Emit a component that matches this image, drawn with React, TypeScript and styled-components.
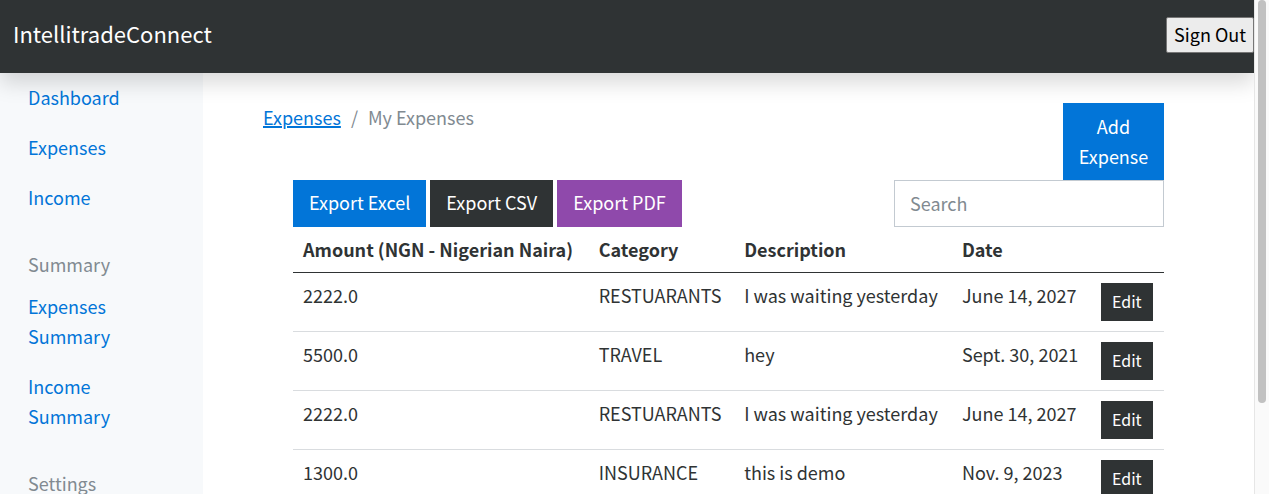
import React from "react";
import styled, { createGlobalStyle } from "styled-components";

const blue = "#0275d8";
const dark = "#2f3334";
const purple = "#8f49ab";
const muted = "#818a91";

const GlobalStyle = createGlobalStyle`
  *, *::before, *::after { box-sizing: border-box; }
  body {
    margin: 0;
    background: #fff;
    color: ${dark};
    font-family: "Noto Sans CJK SC", "Open Sans", sans-serif;
    font-size: 18px;
    line-height: 30px;
  }
  button, input { font-family: inherit; font-size: inherit; }
`;

const Shell = styled.div`
  display: flex;
  height: 100vh;
  overflow: hidden;
`;

const Page = styled.div`
  display: flex;
  flex-direction: column;
  flex: 1;
  min-width: 0;
  overflow: hidden;
`;

const Header = styled.header`
  position: relative;
  z-index: 1;
  display: flex;
  flex: none;
  align-items: center;
  justify-content: space-between;
  height: 73px;
  padding: 0 0 4px 13px;
  background: ${dark};
  box-shadow: 0 10px 20px rgba(0, 0, 0, 0.15);
`;

const Brand = styled.a`
  padding-bottom: 4px;
  color: #fff;
  font-size: 22px;
  text-decoration: none;
`;

const SignOut = styled.button`
  height: 36px;
  padding: 0 7px 2px;
  border: 1px solid #767676;
  border-radius: 2px;
  background: #ececec;
  color: #000;
  line-height: 30px;
`;

const Body = styled.div`
  display: flex;
  flex: 1;
  min-height: 0;
`;

const Sidebar = styled.nav`
  flex: none;
  width: 203px;
  padding: 0 28px;
  background: #f7f9fb;
`;

const NavList = styled.ul`
  margin: 0;
  padding: 0;
  list-style: none;
`;

const NavLink = styled.a`
  display: block;
  padding: 9px 0 11px;
  color: ${blue};
  text-decoration: none;
`;

const NavHeading = styled.h6`
  margin: 26px 0 3px;
  color: ${muted};
  font-size: 18px;
  font-weight: 400;
`;

const Main = styled.main`
  flex: 1;
  min-width: 0;
  padding: 30px 90px 0 60px;
`;

const TopRow = styled.div`
  display: flex;
  align-items: flex-start;
  justify-content: space-between;
`;

const Breadcrumb = styled.ol`
  display: flex;
  gap: 10px;
  margin: 0;
  padding: 0;
  color: ${muted};
  line-height: 28px;
  list-style: none;

  a {
    color: ${blue};
    text-decoration-thickness: 2px;
    text-underline-offset: 1px;
  }
`;

const Button = styled.button<{ $color: string }>`
  padding: 7px 16px 10px;
  border: 0;
  background: ${(p) => p.$color};
  color: #fff;
  line-height: 30px;
`;

const AddButton = styled(Button)`
  width: 101px;
  padding: 8px 15px 9px;
`;

const Panel = styled.section`
  padding-left: 30px;
`;

const Toolbar = styled.div`
  display: flex;
  justify-content: space-between;
`;

const Exports = styled.div`
  display: flex;
  gap: 4px;
`;

const Search = styled.input`
  width: 270px;
  padding: 0 15px 2px;
  border: 1px solid #c3cad1;
  background: #fff;
  color: ${dark};

  &::placeholder { color: ${muted}; opacity: 1; }
`;

const Table = styled.table`
  width: 100%;
  border-collapse: collapse;
  white-space: nowrap;

  th {
    padding: 7px 10px 8px;
    border-bottom: 1px solid ${dark};
    text-align: left;
    font-weight: 700;
  }
  td {
    padding: 7px 10px 10px;
    border-bottom: 1px solid #d9dcdf;
    vertical-align: top;
  }
  td:last-child { padding-top: 10px; }
`;

const EditButton = styled.button`
  display: block;
  height: 38px;
  padding: 0 11px 2px;
  border: 0;
  background: ${dark};
  color: #fff;
  font-size: 16px;
`;

const ScrollTrack = styled.div`
  flex: none;
  width: 15px;
  padding: 0 3px;
  border-left: 1px solid #e6e6e6;
  background: #fafafa;
`;

const ScrollThumb = styled.div`
  width: 8px;
  height: calc(82% - 2px);
  border-radius: 4px;
  background: #c1c1c1;
`;

const expenses = [
  ["2222.0", "RESTUARANTS", "I was waiting yesterday", "June 14, 2027"],
  ["5500.0", "TRAVEL", "hey", "Sept. 30, 2021"],
  ["2222.0", "RESTUARANTS", "I was waiting yesterday", "June 14, 2027"],
  ["1300.0", "INSURANCE", "this is demo", "Nov. 9, 2023"],
];

function NavItems({ items }: { items: string[] }) {
  return (
    <NavList>
      {items.map((item) => (
        <li key={item}>
          <NavLink href="#">{item}</NavLink>
        </li>
      ))}
    </NavList>
  );
}

export default function App() {
  return (
    <Shell>
      <GlobalStyle />
      <Page>
        <Header>
          <Brand href="#">IntellitradeConnect</Brand>
          <SignOut type="button">Sign Out</SignOut>
        </Header>
        <Body>
          <Sidebar>
            <NavItems items={["Dashboard", "Expenses", "Income"]} />
            <NavHeading>Summary</NavHeading>
            <NavItems items={["Expenses Summary", "Income Summary"]} />
            <NavHeading>Settings</NavHeading>
          </Sidebar>
          <Main>
            <TopRow>
              <Breadcrumb>
                <li><a href="#">Expenses</a></li>
                <li aria-hidden="true">/</li>
                <li>My Expenses</li>
              </Breadcrumb>
              <AddButton type="button" $color={blue}>Add Expense</AddButton>
            </TopRow>
            <Panel>
              <Toolbar>
                <Exports>
                  <Button type="button" $color={blue}>Export Excel</Button>
                  <Button type="button" $color={dark}>Export CSV</Button>
                  <Button type="button" $color={purple}>Export PDF</Button>
                </Exports>
                <Search type="text" placeholder="Search" aria-label="Search" />
              </Toolbar>
              <Table>
                <thead>
                  <tr>
                    <th>Amount (NGN - Nigerian Naira)</th>
                    <th>Category</th>
                    <th>Description</th>
                    <th>Date</th>
                    <th aria-label="Actions" />
                  </tr>
                </thead>
                <tbody>
                  {expenses.map((row, i) => (
                    <tr key={i}>
                      {row.map((value, j) => (
                        <td key={j}>{value}</td>
                      ))}
                      <td><EditButton type="button">Edit</EditButton></td>
                    </tr>
                  ))}
                </tbody>
              </Table>
            </Panel>
          </Main>
        </Body>
      </Page>
      <ScrollTrack aria-hidden="true">
        <ScrollThumb />
      </ScrollTrack>
    </Shell>
  );
}
